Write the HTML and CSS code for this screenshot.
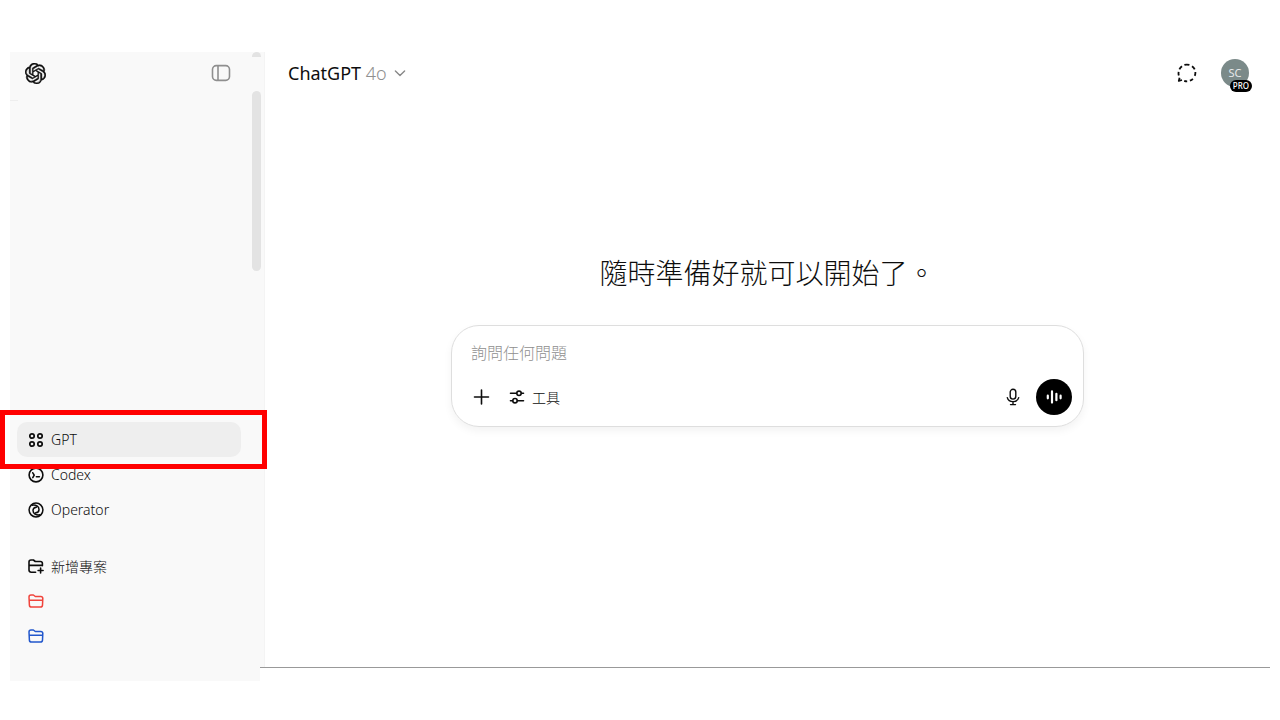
FILE: index.html
```html
<!DOCTYPE html>
<html lang="zh-Hant">
<head>
    <meta charset="UTF-8">
    <meta name="viewport" content="width=device-width, initial-scale=1.0">
    <title>ChatGPT</title>
    <link rel="stylesheet" href="styles.css">
</head>
<body>

<div class="app">
    <aside class="sidebar">
        <div class="sidebar-header">
            <a href="#" class="logo" aria-label="ChatGPT">
                <svg width="21" height="21" viewBox="0 0 24 24" fill="currentColor" stroke="currentColor" stroke-width=".5"><path d="M22.2819 9.8211a5.9847 5.9847 0 0 0-.5157-4.9108 6.0462 6.0462 0 0 0-6.5098-2.9A6.0651 6.0651 0 0 0 4.9807 4.1818a5.9847 5.9847 0 0 0-3.9977 2.9 6.0462 6.0462 0 0 0 .7427 7.0966 5.98 5.98 0 0 0 .511 4.9107 6.051 6.051 0 0 0 6.5146 2.9001A5.9847 5.9847 0 0 0 13.2599 24a6.0557 6.0557 0 0 0 5.7718-4.2058 5.9894 5.9894 0 0 0 3.9977-2.9001 6.0557 6.0557 0 0 0-.7475-7.0729zm-9.022 12.6081a4.4755 4.4755 0 0 1-2.8764-1.0408l.1419-.0804 4.7783-2.7582a.7948.7948 0 0 0 .3927-.6813v-6.7369l2.02 1.1686a.071.071 0 0 1 .038.052v5.5826a4.504 4.504 0 0 1-4.4945 4.4944zm-9.6607-4.1254a4.4708 4.4708 0 0 1-.5346-3.0137l.142.0852 4.783 2.7582a.7712.7712 0 0 0 .7806 0l5.8428-3.3685v2.3324a.0804.0804 0 0 1-.0332.0615L9.74 19.9502a4.4992 4.4992 0 0 1-6.1408-1.6464zM2.3408 7.8956a4.485 4.485 0 0 1 2.3655-1.9728V11.6a.7664.7664 0 0 0 .3879.6765l5.8144 3.3543-2.0201 1.1685a.0757.0757 0 0 1-.071 0l-4.8303-2.7865A4.504 4.504 0 0 1 2.3408 7.872zm16.5963 3.8558L13.1038 8.364 15.1192 7.2a.0757.0757 0 0 1 .071 0l4.8303 2.7913a4.4944 4.4944 0 0 1-.6765 8.1042v-5.6772a.79.79 0 0 0-.407-.667zm2.0107-3.0231l-.142-.0852-4.7735-2.7818a.7759.7759 0 0 0-.7854 0L9.409 9.2297V6.8974a.0662.0662 0 0 1 .0284-.0615l4.8303-2.7866a4.4992 4.4992 0 0 1 6.6802 4.66zM8.3065 12.863l-2.02-1.1638a.0804.0804 0 0 1-.038-.0567V6.0742a4.4992 4.4992 0 0 1 7.3757-3.4537l-.142.0805L8.704 5.459a.7948.7948 0 0 0-.3927.6813zm1.0976-2.3654l2.602-1.4998 2.6069 1.4998v2.9994l-2.5974 1.4997-2.6067-1.4997Z"/></svg>
            </a>
            <button class="icon-button toggle" aria-label="Toggle sidebar">
                <svg width="20" height="20" viewBox="0 0 20 20" fill="none" stroke="currentColor" stroke-width="1.6"><rect x="1.5" y="2.6" width="17" height="14.8" rx="3.8"/><path d="M7 2.6v14.8"/></svg>
            </button>
        </div>
        <div class="divider"></div>
        <div class="scroll-cap"></div>
        <div class="scroll-thumb"></div>

        <nav class="menu">
            <div class="highlighted">
                <a href="#" class="menu-item active">
                    <svg class="icon" viewBox="0 0 16 16" fill="none" stroke="currentColor" stroke-width="1.7"><circle cx="4" cy="4" r="2.2"/><circle cx="12" cy="4" r="2.2"/><circle cx="4" cy="12" r="2.2"/><circle cx="12" cy="12" r="2.2"/></svg>
                    GPT
                </a>
            </div>
            <a href="#" class="menu-item">
                <svg class="icon" viewBox="0 0 16 16" fill="none" stroke="currentColor" stroke-width="1.6" stroke-linecap="round" stroke-linejoin="round"><circle cx="8" cy="8" r="6.9"/><path d="M4.8 5.8l1.4 2.4-1.4 2.4M8.4 9.8h3"/></svg>
                Codex
            </a>
            <a href="#" class="menu-item">
                <svg class="icon" viewBox="0 0 16 16" fill="none" stroke="currentColor" stroke-width="1.5" stroke-linecap="round"><circle cx="8" cy="8" r="6.9"/><path d="M4.2 3.2C8 2.6 11 4.4 11 7.4c0 1.9-1.3 3.2-3.3 3.4M11.8 12.8C8 13.4 5 11.6 5 8.6c0-1.9 1.3-3.2 3.3-3.4"/></svg>
                Operator
            </a>
        </nav>
        <nav class="menu projects">
            <a href="#" class="menu-item">
                <svg class="icon" viewBox="0 0 16 16" fill="none" stroke="currentColor" stroke-width="1.6" stroke-linecap="round" stroke-linejoin="round"><path d="M7.6 14.2H3.2Q1.2 14.2 1 12.2V4Q1 2 3 2h2.4l1.9 1.5h5.2q1.8 0 1.9 1.9v2.3M1 7.4h13.4M12.6 10v5M10.1 12.5h5"/></svg>
                新增專案
            </a>
            <a href="#" class="menu-item red" aria-label="Project">
                <svg class="icon" viewBox="0 0 16 16" fill="none" stroke="currentColor" stroke-width="1.5" stroke-linejoin="round"><path d="M1 4Q1 2 3 2h2.4l1.9 1.5h5.5q1.9 0 2 1.9l-.3 6.7q-.2 2-2.1 2H3.5q-2 0-2.1-2zM1.1 7.2h13.7"/></svg>
            </a>
            <a href="#" class="menu-item blue" aria-label="Project">
                <svg class="icon" viewBox="0 0 16 16" fill="none" stroke="currentColor" stroke-width="1.5" stroke-linejoin="round"><path d="M1 4Q1 2 3 2h2.4l1.9 1.5h5.5q1.9 0 2 1.9l-.3 6.7q-.2 2-2.1 2H3.5q-2 0-2.1-2zM1.1 7.2h13.7"/></svg>
            </a>
        </nav>
    </aside>

    <div class="gutter"></div>

    <main class="main">
        <header class="topbar">
            <button class="model">
                <span>ChatGPT <span class="version">4o</span></span>
                <svg width="12" height="12" viewBox="0 0 12 12" fill="none" stroke="#888" stroke-width="1.4" stroke-linecap="round" stroke-linejoin="round"><path d="M1.4 4l4.6 4.4L10.6 4"/></svg>
            </button>
            <div class="account">
                <button class="icon-button" aria-label="Temporary chat">
                    <svg width="20" height="20" viewBox="0 0 20 20" fill="none" stroke="currentColor" stroke-width="1.8" stroke-linejoin="round"><path d="M7.4 1.9q2.4-.7 5 0M15 3.2q1.8 1.2 2.7 3.2M18.4 9q.1 2-.6 3.9M15.9 15.8q-1.2 1.2-3 1.9M10.2 18.3q-1.6 0-3-.5M5 17l-3.2.9.8-3.2M1.8 12.4q-.5-1.7-.2-3.6M2.4 6.3q.9-1.9 2.6-3.1"/></svg>
                </button>
                <button class="avatar">SC<span class="badge">PRO</span></button>
            </div>
        </header>

        <section class="stage">
            <h1>隨時準備好就可以開始了。</h1>
            <form class="composer">
                <input type="text" class="prompt" placeholder="詢問任何問題" aria-label="詢問任何問題">
                <div class="tools">
                    <button type="button" class="icon-button" aria-label="Add">
                        <svg width="20" height="20" viewBox="0 0 20 20" fill="none" stroke="currentColor" stroke-width="1.6" stroke-linecap="round"><path d="M10.5 3v14M3.5 10h14"/></svg>
                    </button>
                    <button type="button" class="tool-button">
                        <svg class="icon" viewBox="0 0 16 16" fill="none" stroke="currentColor" stroke-width="1.6" stroke-linecap="round"><path d="M1.5 4.3h6M12.5 4.3h2M1.5 11.7h2M8.5 11.7h6"/><circle cx="10" cy="4.3" r="2.2"/><circle cx="6" cy="11.7" r="2.2"/></svg>
                        工具
                    </button>
                    <button type="button" class="icon-button mic" aria-label="Dictate">
                        <svg width="18" height="18" viewBox="0 0 18 18" fill="none" stroke="currentColor" stroke-width="1.4" stroke-linecap="round"><rect x="6.2" y="1.3" width="5.6" height="9.8" rx="2.8"/><path d="M3.3 9.6C4 12.2 6.1 13.6 9 13.6s5-1.4 5.7-4M9 13.6v3M6.5 16.6h5"/></svg>
                    </button>
                    <button type="button" class="voice" aria-label="Voice mode">
                        <svg width="18" height="18" viewBox="0 0 18 18" fill="none" stroke="currentColor" stroke-width="2.2" stroke-linecap="round"><path d="M2.8 7.7v2.6M7 3.4v11.2M11.4 5.8v6.4M15.6 7.7v2.6"/></svg>
                    </button>
                </div>
            </form>
        </section>
    </main>
</div>

</body>
</html>
```
FILE: styles.css
```css
* {
    box-sizing: border-box;
}

body {
    margin: 0;
    background-color: #fff;
    color: #0d0d0d;
    font-family: "Noto Sans", "Noto Sans CJK TC", sans-serif;
    font-size: 14px;
    font-weight: 300;
}

button,
input {
    padding: 0;
    border: none;
    background: none;
    color: inherit;
    font: inherit;
}

button {
    cursor: pointer;
}

a {
    color: inherit;
    text-decoration: none;
}

svg {
    display: block;
    flex-shrink: 0;
}

.icon {
    width: 16px;
    height: 16px;
}

.icon-button {
    display: flex;
}

.app {
    display: flex;
    align-items: flex-start;
    padding: 52px 10px 0;
}

/* Sidebar */
.sidebar {
    position: relative;
    display: flex;
    flex-direction: column;
    flex: 0 0 250px;
    min-height: calc(100vh - 91px);
    padding-bottom: 28px;
    background-color: #f9f9f9;
}

.sidebar-header {
    display: flex;
    justify-content: space-between;
    align-items: center;
    height: 42px;
    padding: 0 29px 0 15px;
}

.logo {
    display: flex;
}

.toggle {
    color: #8f8f8f;
}

.divider {
    width: 8px;
    margin-top: 6px;
    border-top: 1px solid #eee;
}

.scroll-cap,
.scroll-thumb {
    position: absolute;
    left: 242px;
    width: 9px;
    background-color: #e3e3e3;
}

.scroll-cap {
    top: 0;
    height: 5px;
    border-radius: 5px 5px 0 0;
}

.scroll-thumb {
    top: 39px;
    height: 180px;
    border-radius: 5px;
}

.gutter {
    flex: 0 0 5px;
    height: calc(100vh - 105px);
    border-right: 1px solid #f4f4f4;
    background-color: #f9f9f9;
}

.menu {
    margin-top: auto;
    padding: 0 19px 0 7px;
}

.projects {
    margin-top: 21px;
}

.menu-item {
    display: flex;
    align-items: center;
    gap: 7px;
    height: 35px;
    padding: 0 11px;
    border-radius: 10px;
}

.active {
    background-color: #eee;
}

.red {
    color: #f0443c;
}

.blue {
    color: #2257cc;
}

.highlighted {
    position: relative;
}

/* Frame drawn around the selected entry */
.highlighted::after {
    content: "";
    position: absolute;
    z-index: 1;
    inset: -12px -26px -12px -17px;
    border: 5px solid #f00;
    pointer-events: none;
}

/* Main area */
.main {
    flex: 1;
    min-width: 0;
    min-height: calc(100vh - 104px);
    margin-left: -5px;
    border-bottom: 1px solid #999;
}

.topbar {
    display: flex;
    justify-content: space-between;
    align-items: center;
    height: 42px;
    padding: 0 21px 0 28px;
}

.model {
    display: flex;
    align-items: center;
    gap: 7px;
    font-size: 18px;
    font-weight: 400;
}

.version {
    color: #8f8f8f;
    font-weight: 300;
}

.account {
    display: flex;
    align-items: center;
    gap: 24px;
}

.avatar {
    position: relative;
    width: 28px;
    height: 28px;
    border-radius: 50%;
    background-color: #7b8a89;
    color: #e6e9e9;
    font-size: 11px;
    font-weight: 400;
    line-height: 28px;
}

.badge {
    position: absolute;
    right: -3px;
    bottom: -5px;
    padding: 0 3px;
    border-radius: 6px;
    background-color: #000;
    color: #fff;
    font-size: 8px;
    font-weight: 500;
    line-height: 12px;
}

.stage {
    display: flex;
    flex-direction: column;
    align-items: center;
    padding: 159px 20px 20px 25px;
}

h1 {
    margin: 0 0 32px;
    font-size: 28px;
    font-weight: 300;
    line-height: 40px;
}

.composer {
    width: 100%;
    max-width: 633px;
    padding: 16px 11px 11px 19px;
    border: 1px solid #dedede;
    border-radius: 28px;
    box-shadow: 0 4px 8px rgba(0, 0, 0, 0.05);
}

.prompt {
    display: block;
    width: 100%;
    height: 22px;
    outline: none;
    font-size: 16px;
}

.prompt::placeholder {
    color: #8f8f8f;
}

.tools {
    display: flex;
    align-items: center;
    gap: 18px;
    margin-top: 15px;
}

.tool-button {
    display: flex;
    align-items: center;
    gap: 7px;
}

.mic {
    margin: 0 -4px 0 auto;
}

.voice {
    display: flex;
    align-items: center;
    justify-content: center;
    width: 36px;
    height: 36px;
    border-radius: 50%;
    background-color: #000;
    color: #fff;
}
```
